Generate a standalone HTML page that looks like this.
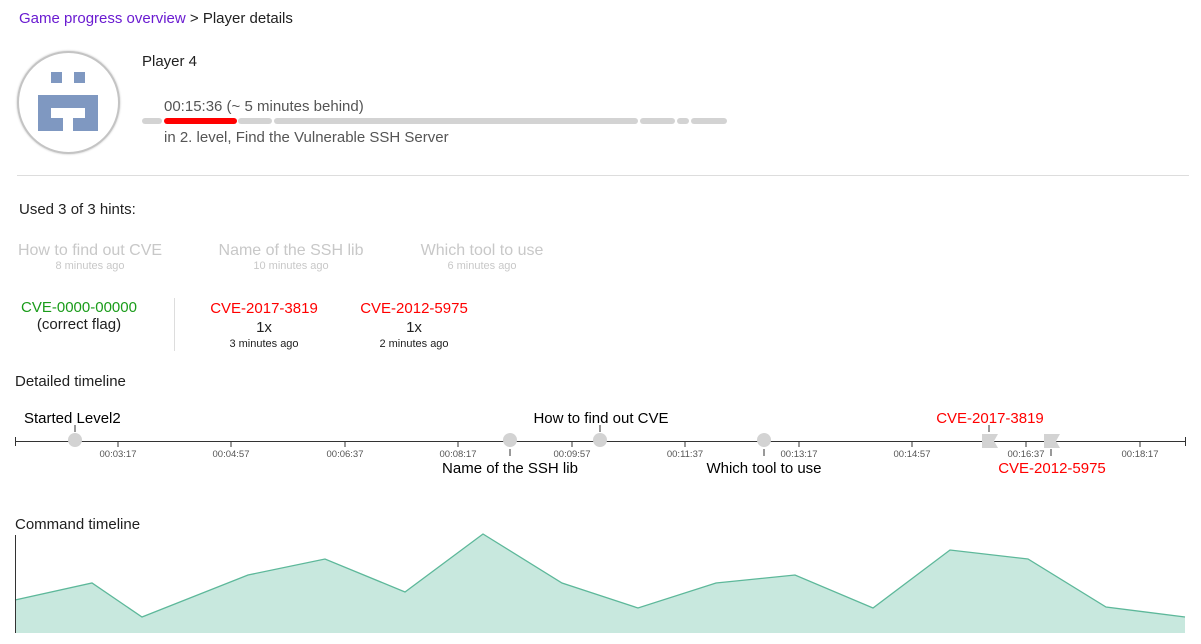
<!DOCTYPE html>
<html><head><meta charset="utf-8"><style>
*{margin:0;padding:0;box-sizing:border-box}
body{width:1201px;height:644px;background:#fff;font-family:"Liberation Sans",sans-serif;color:#212121;position:relative;overflow:hidden}
.a{position:absolute;white-space:nowrap}
.c{transform:translateX(-50%);text-align:center}
.f15{font-size:15px}
.seg{position:absolute;top:118px;height:6px;border-radius:3px;background:#d3d3d3}
</style></head><body>
<div class="a f15" style="left:19px;top:10px"><span style="color:#6a1bd1">Game progress overview</span> &gt; Player details</div>
<div class="a" style="left:17px;top:51px;width:103px;height:103px;border-radius:50%;border:2px solid #c4c4c4;background:#fff;box-shadow:0 0 2px rgba(0,0,0,0.25)"></div>
<div class="a" style="left:51px;top:72px;width:11px;height:11px;background:#7f98c1"></div>
<div class="a" style="left:74px;top:72px;width:11px;height:11px;background:#7f98c1"></div>
<div class="a" style="left:38px;top:95px;width:60px;height:36px;background:#7f98c1"></div>
<div class="a" style="left:51px;top:108px;width:34px;height:10px;background:#fff"></div>
<div class="a" style="left:63px;top:117px;width:10px;height:14px;background:#fff"></div>
<div class="a f15" style="left:142px;top:53px">Player 4</div>
<div class="a f15" style="left:164px;top:98px;color:#555">00:15:36 (~ 5 minutes behind)</div>
<div class="seg" style="left:142px;width:20px"></div>
<div class="seg" style="left:164px;width:73px;background:#f00"></div>
<div class="seg" style="left:238px;width:34px"></div>
<div class="seg" style="left:274px;width:364px"></div>
<div class="seg" style="left:640px;width:35px"></div>
<div class="seg" style="left:677px;width:12px"></div>
<div class="seg" style="left:691px;width:36px"></div>
<div class="a f15" style="left:164px;top:129px;color:#555">in 2. level, Find the Vulnerable SSH Server</div>
<div class="a" style="left:17px;top:175px;width:1172px;height:1px;background:#ddd"></div>
<div class="a f15" style="left:19px;top:201px">Used 3 of 3 hints:</div>
<div class="a c" style="left:90px;top:242px;color:#c8c8c8;font-size:16px">How to find out CVE<div style="font-size:11px;margin-top:0px">8 minutes ago</div></div>
<div class="a c" style="left:291px;top:242px;color:#c8c8c8;font-size:16px">Name of the SSH lib<div style="font-size:11px;margin-top:0px">10 minutes ago</div></div>
<div class="a c" style="left:482px;top:242px;color:#c8c8c8;font-size:16px">Which tool to use<div style="font-size:11px;margin-top:0px">6 minutes ago</div></div>
<div class="a c f15" style="left:79px;top:299px"><span style="color:#1a9c1a">CVE-0000-00000</span><br>(correct flag)</div>
<div class="a" style="left:174px;top:298px;width:1px;height:53px;background:#ddd"></div>
<div class="a c f15" style="left:264px;top:299px;line-height:19px"><span style="color:#f00">CVE-2017-3819</span><br>1x<div style="font-size:11px;line-height:14px">3 minutes ago</div></div>
<div class="a c f15" style="left:414px;top:299px;line-height:19px"><span style="color:#f00">CVE-2012-5975</span><br>1x<div style="font-size:11px;line-height:14px">2 minutes ago</div></div>
<div class="a f15" style="left:15px;top:373px">Detailed timeline</div>
<svg class="a" style="left:0;top:400px" width="1201" height="80" font-family="Liberation Sans, sans-serif">
<line x1="15" y1="41.5" x2="1186" y2="41.5" stroke="#333"/>
<line x1="15.5" y1="37" x2="15.5" y2="46" stroke="#333"/><line x1="1185.5" y1="37" x2="1185.5" y2="46" stroke="#333"/>
<g stroke="#333"><line x1="118" y1="41" x2="118" y2="47"/><line x1="231" y1="41" x2="231" y2="47"/><line x1="345" y1="41" x2="345" y2="47"/><line x1="458" y1="41" x2="458" y2="47"/><line x1="572" y1="41" x2="572" y2="47"/><line x1="685" y1="41" x2="685" y2="47"/><line x1="799" y1="41" x2="799" y2="47"/><line x1="912" y1="41" x2="912" y2="47"/><line x1="1026" y1="41" x2="1026" y2="47"/><line x1="1140" y1="41" x2="1140" y2="47"/></g>
<g font-size="9.5" fill="#555" text-anchor="middle"><text x="118" y="57">00:03:17</text><text x="231" y="57">00:04:57</text><text x="345" y="57">00:06:37</text><text x="458" y="57">00:08:17</text><text x="572" y="57">00:09:57</text><text x="685" y="57">00:11:37</text><text x="799" y="57">00:13:17</text><text x="912" y="57">00:14:57</text><text x="1026" y="57">00:16:37</text><text x="1140" y="57">00:18:17</text></g>
<g stroke="#333"><line x1="75" y1="25" x2="75" y2="32"/><line x1="600" y1="25" x2="600" y2="32"/><line x1="989" y1="25" x2="989" y2="32"/><line x1="510" y1="49" x2="510" y2="56"/><line x1="764" y1="49" x2="764" y2="56"/><line x1="1051" y1="49" x2="1051" y2="56"/></g>
<g fill="#d3d3d3"><circle cx="75" cy="40" r="7"/><circle cx="510" cy="40" r="7"/><circle cx="600" cy="40" r="7"/><circle cx="764" cy="40" r="7"/>
<polygon points="982,34 998,34 994,41 998,48 982,48"/><polygon points="1044,34 1060,34 1056,41 1060,48 1044,48"/></g>
<g font-size="15"><text x="24" y="23">Started Level2</text><text x="601" y="23" text-anchor="middle">How to find out CVE</text><text x="990" y="23" text-anchor="middle" fill="#f00">CVE-2017-3819</text>
<text x="510" y="73" text-anchor="middle">Name of the SSH lib</text><text x="764" y="73" text-anchor="middle">Which tool to use</text><text x="1052" y="73" text-anchor="middle" fill="#f00">CVE-2012-5975</text></g>
</svg>
<div class="a f15" style="left:15px;top:516px">Command timeline</div>
<svg class="a" style="left:0;top:0" width="1201" height="644">
<path d="M15,600 L92,583 L142,617 L248,575 L325,559 L405,592 L483,534 L562,583 L638,608 L716,583 L795,575 L873,608 L950,550 L1028,559 L1106,607 L1185,617 L1185,633 L15,633Z" fill="#c8e8de"/>
<path d="M15,600 L92,583 L142,617 L248,575 L325,559 L405,592 L483,534 L562,583 L638,608 L716,583 L795,575 L873,608 L950,550 L1028,559 L1106,607 L1185,617" fill="none" stroke="#5db89a" stroke-width="1.3"/>
<line x1="15.5" y1="535" x2="15.5" y2="633" stroke="#333"/>
</svg>
</body></html>
